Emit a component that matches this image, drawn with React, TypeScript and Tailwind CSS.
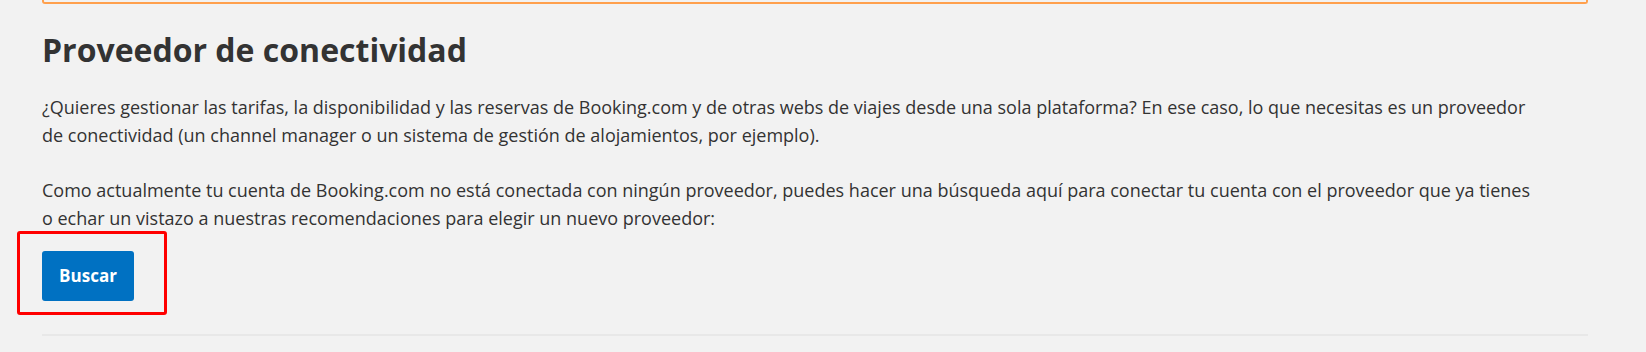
export default function App() {
  return (
    <div className="min-h-screen bg-[#f2f2f2] font-['Open_Sans',sans-serif] text-[#333333]">
      <div className="ml-[42px] w-[1546px]">
        <div className="h-[4px] rounded-b-[3px] border-x-2 border-b-2 border-[#ffa04d]" />

        <h1 className="mt-[26px] text-[32px] font-bold leading-[40px] text-[#333333]">
          Proveedor de conectividad
        </h1>

        <p className="mt-[23px] text-[18px] leading-[28px]">
          ¿Quieres gestionar las tarifas, la disponibilidad y las reservas de Booking.com y de otras webs de viajes desde una sola plataforma? En ese caso, lo que necesitas es un proveedor
          <br />
          de conectividad (un channel manager o un sistema de gestión de alojamientos, por ejemplo).
        </p>

        <p className="mt-[27px] text-[18px] leading-[28px]">
          Como actualmente tu cuenta de Booking.com no está conectada con ningún proveedor, puedes hacer una búsqueda aquí para conectar tu cuenta con el proveedor que ya tienes
          <br />
          o echar un vistazo a nuestras recomendaciones para elegir un nuevo proveedor:
        </p>

        <div className="relative mt-[19px] w-[92px]">
          <button className="flex h-[50px] w-[92px] items-center justify-center rounded-[3px] bg-[#0071c2] text-[17px] font-bold text-white">
            Buscar
          </button>
          <div className="pointer-events-none absolute left-[-25px] top-[-20px] h-[84px] w-[150px] rounded-[3px] border-[3px] border-[#ff0000]" />
        </div>

        <div className="mt-[33px] h-[2px] bg-[#e8e8e8]" />
      </div>
    </div>
  );
}
